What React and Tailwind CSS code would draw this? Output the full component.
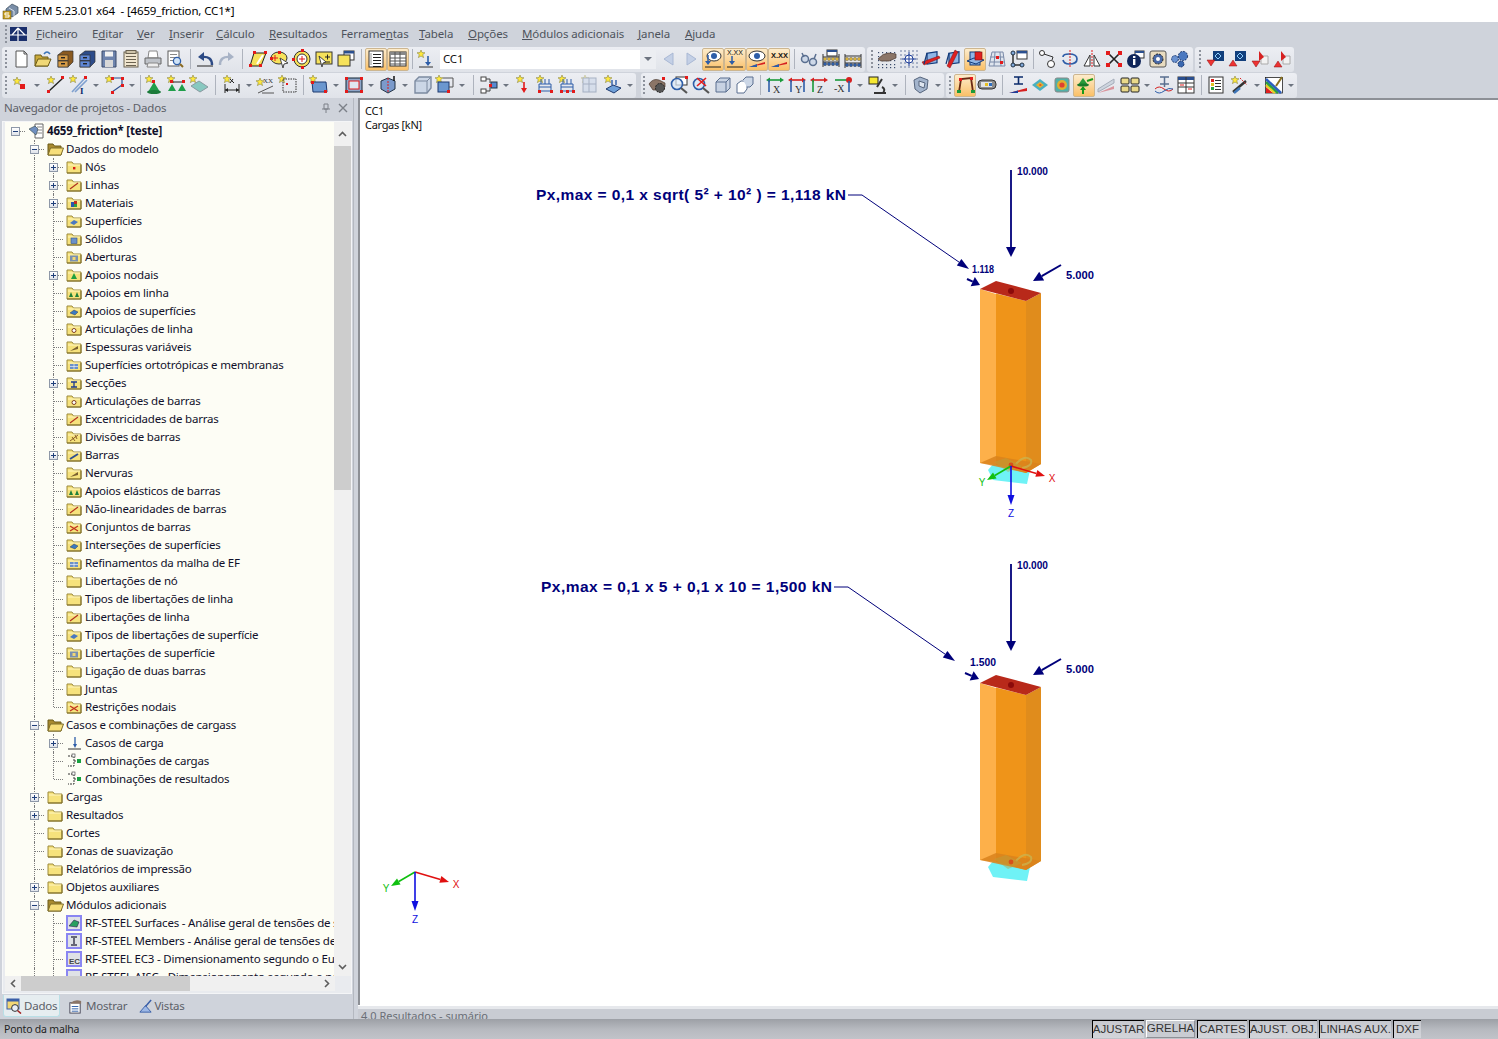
import React from 'react';

const UI = { fontFamily: '"Noto Sans", "Open Sans", sans-serif' };
const ARIAL = { fontFamily: '"Liberation Sans", Arial, sans-serif' };

const Star = ({ x = 0, y = 0 }) => (
  <polygon
    transform={`translate(${x} ${y})`}
    points="4,0 5,2.6 8,2.8 5.7,4.6 6.6,7.6 4,6 1.4,7.6 2.3,4.6 0,2.8 3,2.6"
    fill="#ffe93b"
    stroke="#8a8440"
    strokeWidth="0.6"
  />
);
const Red = ({ x, y, s = 3 }) => <rect x={x} y={y} width={s} height={s} fill="#e31b1b" />;
const Blue = '#2d5da8';
const Navy = '#0a2a6b';
const Doc = ({ x = 4, y = 2, w = 12, h = 16, fill = '#fff' }) => (
  <rect x={x} y={y} width={w} height={h} fill={fill} stroke="#5b5b5b" strokeWidth="1" />
);
const Lines = ({ x, y, w, n = 3, c = '#444', step = 3 }) => (
  <g stroke={c} strokeWidth="1">
    {Array.from({ length: n }).map((_, i) => (
      <line key={i} x1={x} x2={x + w} y1={y + i * step + 0.5} y2={y + i * step + 0.5} />
    ))}
  </g>
);
const Cabinet = ({ a, b }) => (
  <g>
    <path d="M3 6 L8 2 H18 V13 L13 18 H3 Z" fill={b} stroke="#333" strokeWidth="0.7" />
    <rect x="3" y="6" width="10" height="5.5" fill={a} stroke="#333" strokeWidth="0.7" />
    <rect x="3" y="12" width="10" height="6" fill={a} stroke="#333" strokeWidth="0.7" />
    <rect x="6" y="8" width="4" height="1.4" fill="#222" />
    <rect x="6" y="14" width="4" height="1.4" fill="#222" />
  </g>
);
const Axes = ({ c1, c2, label, arrow = 'M10 4 V18' }) => (
  <g>
    <path d="M4 5 H16" stroke={c1} strokeWidth="1.6" />
    <path d="M1 5 L5 2.5 V7.5 Z M19 5 L15 2.5 V7.5 Z" fill={c1} />
    <path d={arrow} stroke={c2} strokeWidth="1.6" fill="none" />
    <text x="8" y="18" fontSize="10" fontFamily="Liberation Serif, serif" fill="#333">{label}</text>
  </g>
);
const Sheet3d = ({ c = '#8fa9cf' }) => (
  <g>
    <path d="M3 7 L7 3 H17 V13 L13 17 H3 Z" fill={c} fillOpacity="0.35" stroke="#5a6f90" strokeWidth="1" />
    <path d="M3 7 H13 V17 M13 7 L17 3" fill="none" stroke="#5a6f90" strokeWidth="1" />
  </g>
);
const Abacus = () => (
  <g>
    <rect x="6" y="1" width="10" height="6" fill="#fff" stroke="#333" />
    <rect x="6" y="1" width="10" height="2" fill="#2b4f8f" />
    <path d="M2 8 H18 M2 13 H18 M2 5 V18 M18 5 V18" stroke="#333" fill="none" />
    {[4, 8, 12, 16].map((x) => (
      <g key={x}>
        <circle cx={x} cy="10" r="1.7" fill="#d8b23c" stroke="#555" strokeWidth="0.4" />
        <circle cx={x} cy="15" r="1.7" fill={Blue} stroke="#333" strokeWidth="0.4" />
      </g>
    ))}
  </g>
);
const PlaneCross = ({ flip }) => (
  <g>
    <rect x="6" y="3" width="10" height="11" fill="#8fb6e6" stroke="#123a7a" strokeWidth="1.2" transform="skewY(-8) translate(0 2)" />
    <path d={flip ? 'M12 1 L15 3 L7 19 L4 17 Z' : 'M1 13 L18 7 L19 9 L3 16 Z'} fill="#e02020" stroke="#7a1010" strokeWidth="0.5" />
    <path d="M6 4 L3 15" stroke="#123a7a" strokeWidth="1.2" />
  </g>
);
const LoadFlag = ({ up }) => (
  <g>
    <rect x="7" y="2" width="11" height="10" fill="#123f7c" />
    <path d="M9 7 L12 4 L15 7 L12 10 Z" fill="none" stroke="#8fd0ff" />
    <path d={up ? 'M1 17 L5 11 L9 17 Z' : 'M1 11 H9 L5 17 Z'} fill="#e33" stroke="#8a1010" strokeWidth="0.5" />
  </g>
);
const RedFlag = ({ up }) => (
  <g>
    <path d="M11 7 H18 V15 H11 Z" fill="#f2f2f2" stroke="#aaa" />
    <path d="M9 2 L14 8 L9 12 Z" fill="#d62020" />
    <path d={up ? 'M2 18 L6 12 L10 18 Z' : 'M2 12 H10 L6 18 Z'} fill="#e33" stroke="#8a1010" strokeWidth="0.5" />
  </g>
);
const LoadOn = ({ h = false }) => (
  <g>
    <Star x="1" y="0" />
    <path d="M4 9 H16 V16 H4 Z" fill="none" stroke="#2d5da8" />
    <path d="M6 4 V9 M10 4 V9 M14 4 V9 M4 12 H16" stroke="#2d5da8" />
    <Red x="3" y="15" />
    <Red x="15" y="15" />
    {h && <Red x="9" y="15" />}
  </g>
);

const ICONS = {
  newdoc: <path d="M5 2 H13 L16 5 V18 H5 Z M13 2 V5 H16" fill="#fff" stroke="#555" />,
  open: (
    <g>
      <path d="M2 6 H8 L9 8 H15 V17 H2 Z" fill="#c9a93a" stroke="#6b5a18" />
      <path d="M2 17 L5 10 H18 L15 17 Z" fill="#f0d877" stroke="#6b5a18" />
      <path d="M11 5 Q14 1 17 5" stroke="#3d75b8" strokeWidth="1.6" fill="none" />
    </g>
  ),
  drawerA: <Cabinet a="#d69b45" b="#8a5a20" />,
  drawerB: <Cabinet a="#5f87d6" b="#2d4c8a" />,
  save: (
    <g>
      <path d="M3 2 H17 V18 H3 Z" fill="#6e84ad" stroke="#3a4a6b" />
      <rect x="6" y="2.5" width="8" height="5" fill="#f2f2f2" />
      <rect x="6" y="11" width="8" height="7" fill="#d8d8d8" />
    </g>
  ),
  notes: (
    <g>
      <rect x="3" y="3" width="14" height="15" fill="#f1e6cf" stroke="#6b6250" />
      <rect x="5" y="1.5" width="10" height="3" fill="#cfc4aa" stroke="#6b6250" />
      <Lines x={5} y={7} w={10} n={4} c="#6b6250" />
    </g>
  ),
  print: (
    <g>
      <path d="M6 2 H14 L15 9 H5 Z" fill="#fff" stroke="#888" />
      <path d="M2 9 H18 V15 H2 Z" fill="#bfc3c9" stroke="#666" />
      <path d="M5 14 H15 L16 18 H4 Z" fill="#eee" stroke="#888" />
    </g>
  ),
  preview: (
    <g>
      <Doc x={3} y={2} w={11} h={15} />
      <Lines x={5} y={5} w={7} n={3} c="#888" />
      <circle cx="12" cy="12" r="3.6" fill="#cfe3f7" stroke={Blue} strokeWidth="1.3" />
      <path d="M15 15 L18 18" stroke="#8a6a20" strokeWidth="2" />
    </g>
  ),
  undo: (
    <g>
      <path d="M17 16 Q17 7 7 8" fill="none" stroke="#2c4a85" strokeWidth="2.4" />
      <path d="M3 8 L9 3 V12 Z" fill="#2c4a85" />
      <path d="M2 17 H18" stroke="#222" />
    </g>
  ),
  redo: (
    <g>
      <path d="M3 16 Q3 7 13 8" fill="none" stroke="#a8b3c6" strokeWidth="2.4" />
      <path d="M17 8 L11 3 V12 Z" fill="#a8b3c6" />
    </g>
  ),
  para: (
    <g>
      <path d="M6 4 H18 L13 17 H2 Z" fill="#f6e25b" stroke="#222" />
      <path d="M9 15 L15 6" stroke="#fff" strokeWidth="2" />
      <Red x="5" y="2" /><Red x="16" y="2" /><Red x="1" y="15" /><Red x="11" y="15" />
    </g>
  ),
  ellipse: (
    <g>
      <ellipse cx="9" cy="9" rx="8" ry="6" fill="#f6e25b" stroke="#333" />
      <path d="M3 9 H8 M5 6 V12" stroke="#e31b1b" />
      <path d="M10 9 L18 14 L14 15 L13 19 Z" fill="#fff" stroke="#444" />
      <Red x="0" y="8" /><Red x="8" y="2" />
    </g>
  ),
  target: (
    <g>
      <circle cx="10" cy="10" r="8" fill="#f6e25b" stroke="#333" />
      <circle cx="10" cy="10" r="5" fill="#fff" stroke="#333" />
      <path d="M7 10 H13 M10 7 V13" stroke="#e31b1b" />
      <Red x="0" y="9" /><Red x="9" y="0" /><Red x="9" y="17" />
    </g>
  ),
  note: (
    <g>
      <rect x="2" y="3" width="16" height="12" fill="#f6e25b" stroke="#333" />
      <path d="M11 8 H16 M13.5 5.5 V10.5 M11 13 H16" stroke="#222" />
      <path d="M5 7 L12 13 L9 14 L8 18 Z" fill="#fff" stroke="#444" />
    </g>
  ),
  win: (
    <g>
      <rect x="8" y="2" width="10" height="9" fill="#fff" stroke="#333" />
      <rect x="8" y="2" width="10" height="2.5" fill="#2b4f8f" />
      <rect x="2" y="6" width="12" height="11" fill="#f6e25b" stroke="#333" />
    </g>
  ),
  list: (
    <g>
      <rect x="3" y="2" width="14" height="16" fill="#fff" stroke="#333" />
      <Lines x={7} y={5} w={8} n={5} c="#222" />
      <path d="M5 4 V16" stroke="#999" />
    </g>
  ),
  table: (
    <g>
      <rect x="2" y="3" width="16" height="14" fill="#fff" stroke="#333" />
      <rect x="2" y="3" width="16" height="3" fill="#888" />
      <path d="M2 9 H18 M2 12 H18 M2 15 H18 M7 3 V17 M12 3 V17" stroke="#555" />
    </g>
  ),
  ccload: (
    <g>
      <Star x="1" y="1" />
      <path d="M12 7 V15" stroke={Blue} strokeWidth="1.6" />
      <path d="M9 13 H15 L12 17 Z" fill={Blue} />
      <path d="M3 18 H17" stroke="#333" />
    </g>
  ),
  prev: <path d="M14 4 V16 L5 10 Z" fill="#c4d0e6" stroke="#a9b8d4" />,
  next: <path d="M6 4 V16 L15 10 Z" fill="#c4d0e6" stroke="#a9b8d4" />,
  showP: (
    <g>
      <ellipse cx="11" cy="7" rx="7" ry="5" fill="#fff" stroke="#333" />
      <circle cx="11" cy="7" r="3" fill={Blue} />
      <path d="M5 6 V14" stroke={Blue} strokeWidth="1.5" />
      <path d="M2 12 H8 L5 16 Z" fill={Blue} />
      <path d="M2 18 H18" stroke="#222" />
    </g>
  ),
  showX: (
    <g>
      <text x="2" y="6" fontSize="7" fontFamily="Liberation Sans, sans-serif" fill="#111">X.XX</text>
      <path d="M7 7 V14" stroke={Blue} strokeWidth="1.5" />
      <path d="M4 12 H10 L7 16 Z" fill={Blue} />
      <path d="M2 18 H18" stroke="#222" />
    </g>
  ),
  eyeLine: (
    <g>
      <ellipse cx="10" cy="7" rx="8" ry="5" fill="#fff" stroke="#333" />
      <circle cx="10" cy="7" r="3" fill={Blue} />
      <path d="M2 18 L18 13 V15 L2 18 Z" fill="#d62020" />
      <path d="M2 18 L10 15 V18 Z" fill={Blue} />
    </g>
  ),
  xxLine: (
    <g>
      <text x="2" y="9" fontSize="7.5" fontWeight="700" fontFamily="Liberation Sans, sans-serif" fill="#111">X.XX</text>
      <path d="M2 18 L18 13 V15 L2 18 Z" fill="#d62020" />
      <path d="M2 18 L10 15 V18 Z" fill={Blue} />
    </g>
  ),
  glasses: (
    <g>
      <circle cx="6" cy="10" r="3.5" fill="#cdd8e8" stroke="#5a6f90" strokeWidth="1.5" />
      <circle cx="14" cy="13" r="3.5" fill="#cdd8e8" stroke="#5a6f90" strokeWidth="1.5" />
      <path d="M3 4 L5 8 M17 5 L15 10" stroke="#5a6f90" strokeWidth="1.5" />
    </g>
  ),
  abacus: <Abacus />,
  abacus2: <g transform="translate(0 1)"><path d="M2 6 H18 M2 13 H18 M2 4 V18 M18 4 V18" stroke="#333" fill="none" />{[4, 8, 12, 16].map((x) => (<g key={x}><circle cx={x} cy="9" r="1.7" fill="#d8b23c" stroke="#555" strokeWidth="0.4" /><circle cx={x} cy="15" r="1.7" fill={Blue} stroke="#333" strokeWidth="0.4" /></g>))}</g>,
  hand: (
    <g>
      <g fill="#3a4a6a">{[3, 7, 11, 15, 18].map((y) => [1, 5, 9, 13, 17].map((x) => <rect key={`${x}-${y}`} x={x} y={y} width="1.2" height="1.2" />))}</g>
      <path d="M1 10 Q6 4 12 4 L19 5 V9 L12 12 H4 Z" fill="#8b7567" stroke="#4a3a30" strokeWidth="0.7" />
    </g>
  ),
  gridT: (
    <g>
      <g fill="#6a7aa0">{[2, 6, 10, 14, 18].map((y) => [2, 6, 10, 14, 18].map((x) => <rect key={`${x}-${y}`} x={x - 0.7} y={y - 0.7} width="1.4" height="1.4" />))}</g>
      <circle cx="10" cy="10" r="4" fill="#fff" stroke="#1f3f9a" />
      <path d="M3 10 H17 M10 3 V17" stroke="#1f3f9a" />
    </g>
  ),
  plane1: <PlaneCross />,
  plane2: <PlaneCross flip />,
  plane3: <g><rect x="5" y="3" width="10" height="13" fill="#8fb6e6" stroke="#123a7a" /><path d="M2 12 L9 9 L19 11 L11 15 Z" fill="#8fb6e6" stroke="#123a7a" /><rect x="10" y="3" width="7" height="8" fill="#e02020" stroke="#7a1010" strokeWidth="0.6" /></g>,
  gridP: (
    <g>
      <path d="M5 3 H16 L18 17 H2 Z" fill="#dfe5ee" stroke="#7a8aa8" />
      <path d="M3 8 H17 M3 13 H18 M8 3 L7 17 M13 3 L14 17" stroke="#7a8aa8" />
      <Red x="9" y="7" /><Red x="13" y="12" />
    </g>
  ),
  winNode: (
    <g>
      <rect x="8" y="2" width="10" height="8" fill="#fff" stroke="#333" />
      <rect x="8" y="2" width="10" height="2.4" fill="#2b4f8f" />
      <path d="M4 5 V16 H12" fill="none" stroke="#333" strokeWidth="1.5" />
      <circle cx="4" cy="4" r="2" fill="#7fa7d8" stroke="#234" /><circle cx="4" cy="16" r="2" fill="#7fa7d8" stroke="#234" /><circle cx="13" cy="16" r="2" fill="#7fa7d8" stroke="#234" />
    </g>
  ),
  nodes: (
    <g fill="none" stroke="#333">
      <circle cx="4" cy="4" r="2.5" fill="#fff" /><circle cx="13" cy="15" r="3.5" fill="#fff" />
      <path d="M6 5 L15 8 L14 11" />
    </g>
  ),
  rot: (
    <g>
      <path d="M3 8 Q3 5 9 5 Q17 5 17 10 Q17 15 9 15 Q4 15 3 11" fill="none" stroke={Blue} strokeWidth="1.7" />
      <path d="M10 1 V19" stroke="#e31b1b" strokeDasharray="2 1" />
    </g>
  ),
  mirror: (
    <g>
      <path d="M8 6 V17 H2 Z M12 6 V17 H18 Z" fill="#fff" stroke="#333" />
      <path d="M10 1 V19" stroke="#e31b1b" strokeDasharray="2 1" />
    </g>
  ),
  crossN: (
    <g>
      <path d="M4 4 L16 16 M16 4 L4 16" stroke="#222" strokeWidth="1.6" />
      <Red x="2" y="2" s={4} /><Red x="14" y="2" s={4} /><Red x="2" y="14" s={4} /><Red x="14" y="14" s={4} />
    </g>
  ),
  info: (
    <g>
      <rect x="9" y="2" width="9" height="7" fill="#fff" stroke="#333" />
      <rect x="9" y="2" width="9" height="2" fill="#2b4f8f" />
      <circle cx="8" cy="12" r="7" fill="#10265a" />
      <rect x="7" y="10" width="2.4" height="6" fill="#fff" />
      <rect x="7" y="7" width="2.4" height="2" fill="#fff" />
    </g>
  ),
  gearBox: (
    <g>
      <rect x="2" y="2" width="16" height="16" rx="2" fill="#e9dcc0" stroke="#555" />
      <circle cx="10" cy="10" r="5" fill="#4a6aa8" stroke="#222" strokeDasharray="2 1" />
      <circle cx="10" cy="10" r="2" fill="#fff" />
    </g>
  ),
  gears: (
    <g>
      <circle cx="13" cy="7" r="4.6" fill="#4a78c0" stroke="#1e3a70" strokeDasharray="2 1" />
      <circle cx="5" cy="10" r="3.4" fill="#6a92d0" stroke="#1e3a70" strokeDasharray="2 1" />
      <circle cx="11" cy="15" r="3" fill="#3a68b0" stroke="#1e3a70" strokeDasharray="2 1" />
    </g>
  ),
  flagD: <LoadFlag />,
  flagU: <LoadFlag up />,
  redD: <RedFlag />,
  redU: <RedFlag up />,
  nodeNew: <g><Star x="3" y="2" /><Red x="10" y="9" s={5} /></g>,
  lineNew: <g><Star x="1" y="1" /><path d="M3 16 L17 3" stroke="#222" strokeWidth="1.4" /><Red x="1" y="15" /><Red x="15" y="1" /></g>,
  memberNew: (
    <g>
      <Star x="0" y="0" />
      <path d="M3 17 L16 3 M6 17 L18 5" stroke="#7fa0cf" strokeWidth="1.6" />
      <Red x="15" y="1" />
      <text x="11" y="19" fontSize="9" fontWeight="700" fontFamily="Liberation Serif, serif" fill={Navy}>I</text>
    </g>
  ),
  polyNew: <g><Star x="0" y="0" /><path d="M6 3 H17 V10 L7 17" fill="none" stroke="#2d4f90" strokeWidth="1.2" /><Red x="16" y="2" /><Red x="16" y="9" /><Red x="6" y="16" /><Red x="6" y="2" /></g>,
  supNode: <g><Star x="1" y="0" /><path d="M10 7 L16 17 H4 Z" fill="#1f9e4a" /><ellipse cx="10" cy="17" rx="7" ry="2" fill="#1b7a3a" /><Red x="8" y="5" /></g>,
  supLine: <g><Star x="0" y="0" /><path d="M4 7 H16" stroke="#222" /><Red x="3" y="5" /><Red x="15" y="5" /><path d="M5 9 L9 16 H1 Z M15 9 L19 16 H11 Z" fill="#1f9e4a" /></g>,
  supSurf: <g><Star x="0" y="0" /><path d="M2 11 L10 6 L19 12 L11 17 Z" fill="#88c8c0" stroke="#8a9aa0" /></g>,
  dim: <g><Star x="1" y="0" /><path d="M3 15 H17 M3 9 V18 M17 9 V18 M11 4 L8 8 M8 4 L12 8" stroke="#222" /><path d="M3 15 L6 13 V17 Z M17 15 L14 13 V17 Z" fill="#222" /></g>,
  dimX: <g><Star x="0" y="3" /><text x="7" y="8" fontSize="7" fontFamily="Liberation Serif, serif" fill="#333">XX</text><path d="M2 18 L17 11 M6 18 H18" stroke="#555" /></g>,
  selBox: <g><Star x="0" y="0" /><rect x="5" y="4" width="13" height="13" fill="none" stroke="#333" strokeDasharray="1.5 1" /><Red x="8" y="8" s={2} /></g>,
  surfNew: <g><Star x="0" y="0" /><path d="M3 7 H17 L18 17 H4 Z" fill="#6b97cf" stroke="#1e3a70" /><Red x="15" y="15" /><Red x="2" y="6" /></g>,
  openNew: <g><rect x="2" y="3" width="16" height="14" fill="#8fa6c8" stroke="#123" /><rect x="5" y="6" width="10" height="8" fill="#dfe6f0" stroke="#e31b1b" /><Red x="1" y="2" /><Red x="16" y="2" /><Red x="1" y="15" /><Red x="16" y="15" /></g>,
  solidArrow: <g><path d="M3 6 L10 3 L17 6 V14 L10 18 L3 14 Z" fill="#7b9acb" stroke="#234" /><path d="M10 3 V18" stroke="#e31b1b" strokeDasharray="2 1" /><path d="M16 1 V6" stroke="#111" strokeWidth="1.5" /></g>,
  solid: <g><path d="M2 6 L6 2 H18 V13 L14 18 H2 Z" fill="#cbd6e6" stroke="#7c8aa0" strokeWidth="1.4" /><path d="M2 6 H14 V18 M14 6 L18 2" fill="none" stroke="#7c8aa0" /></g>,
  solidNew: <g><Star x="0" y="0" /><rect x="3" y="7" width="11" height="10" fill="#6b97cf" stroke="#1e3a70" /><path d="M8 3 H18 V12 H14" fill="none" stroke="#555" /><Red x="12" y="15" /></g>,
  flowA: <g><rect x="2" y="2" width="5" height="4" fill="#fff" stroke="#444" /><rect x="2" y="14" width="5" height="4" fill="#fff" stroke="#444" /><rect x="12" y="7" width="6" height="6" fill="#5a8ad0" stroke="#234" /><path d="M7 4 H11 V8 M7 16 H11 V12" fill="none" stroke="#444" /><Red x="10" y="9" /></g>,
  nodeLoad: <g><Star x="3" y="0" /><path d="M11 7 V15" stroke="#e31b1b" strokeWidth="1.6" /><path d="M8 13 H14 L11 18 Z" fill="#e31b1b" /></g>,
  lineLoad: <LoadOn />,
  lineLoad2: <LoadOn h />,
  ghostLoad: <g opacity="0.45"><Star x="2" y="0" /><rect x="4" y="3" width="13" height="14" fill="#c4d2e8" stroke="#5a6f90" /><path d="M4 9 H17 M10 3 V17" stroke="#5a6f90" /></g>,
  surfLoad: <g><Star x="1" y="0" /><path d="M9 5 V10 M13 5 V10" stroke={Blue} strokeWidth="1.4" /><path d="M3 14 L10 10 L18 13 L11 18 Z" fill="#6fa0d8" stroke="#1e3a70" /></g>,
  handCog: <g><path d="M2 9 Q6 3 12 5 L18 8 V12 L12 15 H6 Z" fill="#8b7567" stroke="#4a3a30" strokeWidth="0.7" /><circle cx="13" cy="13" r="4.5" fill="#555" stroke="#222" strokeDasharray="2 1" /><Red x="15" y="2" /></g>,
  zoomWin: <g><rect x="7" y="2" width="11" height="8" fill="#fff" stroke="#333" /><circle cx="8" cy="9" r="5.5" fill="#dbe8f6" fillOpacity="0.7" stroke={Blue} strokeWidth="1.6" /><path d="M12 13 L18 18" stroke="#555" strokeWidth="2.2" /><Red x="16" y="1" /></g>,
  zoomX: <g><circle cx="8" cy="9" r="5.5" fill="#dbe8f6" stroke={Blue} strokeWidth="1.6" /><path d="M12 13 L18 18" stroke="#555" strokeWidth="2.2" /><path d="M6 3 L15 11 M15 3 L6 11" stroke="#e31b1b" strokeWidth="1.6" /></g>,
  box: <Sheet3d />,
  boxes: <g><path d="M2 9 L6 6 H12 V14 L9 18 H2 Z" fill="#fff" stroke="#5a6f90" /><path d="M8 5 L11 2 H18 V9 L15 12 H12" fill="#cbd6e6" stroke="#5a6f90" /></g>,
  axX: <Axes c1="#1a9a3a" c2={Blue} label="X" arrow="M4 5 V17" />,
  axY: <Axes c1="#d62020" c2={Blue} label="Y" arrow="M4 5 V17 M17 5 V17" />,
  axZ: <Axes c1="#d62020" c2="#1a9a3a" label="Z" arrow="M4 5 V17" />,
  axMX: <g><path d="M2 5 H14" stroke="#1a9a3a" strokeWidth="1.6" /><circle cx="16" cy="5" r="3" fill="#d62020" /><path d="M16 6 V17" stroke={Blue} strokeWidth="1.6" /><text x="1" y="17" fontSize="10" fontFamily="Liberation Serif, serif" fill="#333">-X</text></g>,
  micro: <g><rect x="1" y="2" width="9" height="7" fill="#f6e832" stroke="#222" /><path d="M14 4 L9 12 M6 18 H18 M14 12 Q18 14 15 18" stroke="#333" strokeWidth="2" fill="none" /></g>,
  shape: <g><path d="M3 5 L9 2 L17 5 L16 14 L9 18 L4 14 Z" fill="#a3b4cc" stroke="#56657d" /><path d="M8 6 L14 8 L13 13 L8 11 Z" fill="#dfe6f0" stroke="#56657d" /></g>,
  frame: <g><path d="M4 17 L6 4 L16 3 L18 17" fill="none" stroke="#6a2a14" strokeWidth="1.8" /><Red x="4" y="3" /><Red x="15" y="2" /><rect x="2" y="15" width="4" height="3" fill="#1a9a3a" /><rect x="16" y="15" width="4" height="3" fill="#1a9a3a" /></g>,
  pill: <g><rect x="1" y="5" width="18" height="9" rx="4" fill="#8d8d8d" stroke="#333" /><rect x="4" y="7" width="11" height="5" fill="#e4e4e4" /><rect x="8" y="8" width="3" height="3" fill="#e8c020" /><rect x="12" y="8" width="3" height="3" fill="#2f6fc0" /></g>,
  ibeam: <g><path d="M6 2 H15 M6 9 H15 M10.5 2 V9" stroke={Navy} strokeWidth="1.6" /><path d="M1 18 L19 13 V16 L1 18 Z" fill="#d62020" /><path d="M1 18 L10 15.5 V18 Z" fill="#1f3f9a" /></g>,
  surfColor: <g><path d="M2 10 L10 4 L18 10 L10 16 Z" fill="#4ab0c0" /><path d="M6 10 L10 7 L14 10 L10 13 Z" fill="#e8b030" /><path d="M9 10 L10 9 L12 10 L10 11 Z" fill="#e04020" /></g>,
  cubeColor: <g><rect x="3" y="3" width="14" height="14" rx="2" fill="#52b0a8" stroke="#888" /><circle cx="10" cy="10" r="5" fill="#e0b030" /><circle cx="10" cy="10" r="2.6" fill="#e04030" /></g>,
  supResult: <g><path d="M9 3 L14 10 H4 Z" fill="#2a9a3a" /><ellipse cx="9" cy="10" rx="6" ry="1.6" fill="#1a7a2a" /><path d="M19 4 L13 6" stroke="#1a9a1a" strokeWidth="2" /><path d="M9 12 V19" stroke="#1a9a1a" strokeWidth="2" /><path d="M6 15 L9 11 L12 15 Z" fill="#1a9a1a" /></g>,
  slope: <g opacity="0.7"><path d="M2 14 L18 4 V8 L2 17 Z" fill="#c4cdd9" stroke="#8a94a4" /><path d="M2 18 L18 11 V14 L2 18 Z" fill="#d6707a" /></g>,
  fourBox: <g fill="#ead98a" stroke="#222">{[[1, 3], [11, 3], [1, 11], [11, 11]].map(([x, y]) => <rect key={`${x}${y}`} x={x} y={y} width="8" height="6" rx="1" />)}</g>,
  ibeamW: <g><path d="M6 2 H15 M6 9 H15 M10.5 2 V12" stroke="#5a6f90" strokeWidth="1.5" /><path d="M1 14 Q5 10 10 14 T19 14" fill="none" stroke="#d62020" /><path d="M1 16 Q5 20 10 16 T19 14" fill="none" stroke={Blue} /></g>,
  tableC: <g><rect x="2" y="2" width="16" height="16" fill="#fff" stroke="#333" /><rect x="2" y="2" width="16" height="3" fill="#2b4f8f" /><path d="M10 2 V18 M2 8 H18 M2 12 H18" stroke="#333" /><rect x="4" y="9.5" width="4" height="1" fill="#e31b1b" /><rect x="12" y="13.5" width="4" height="1" fill="#e31b1b" /></g>,
  report: <g><rect x="3" y="2" width="14" height="16" fill="#fff" stroke="#333" /><rect x="5" y="4" width="3" height="3" fill="#d62020" /><rect x="5" y="8" width="3" height="3" fill="#e0c020" /><rect x="5" y="12" width="3" height="3" fill="#2aa040" /><Lines x={9} y={5} w={6} n={4} c="#333" /></g>,
  wand: <g><Star x="1" y="1" /><path d="M3 17 L16 6" stroke="#333" strokeWidth="2.4" /><path d="M10 3 L17 10" stroke="#d62020" strokeDasharray="1.5 1" /><path d="M4 18 L10 13" stroke="#3d75b8" strokeWidth="2.4" /></g>,
  rainbow: (
    <g fill="none" strokeWidth="2.4">
      <rect x="1.5" y="2.5" width="17" height="15.5" fill="#fff" stroke="#222" strokeWidth="0.8" />
      <path d="M2 18 V12 L9 18 Z" fill="#e02020" stroke="none" />
      <path d="M2 10 L11 18" stroke="#e8d020" />
      <path d="M2 7 L14 18" stroke="#2aa040" />
      <path d="M2 4 L17 18" stroke="#2b5fc0" />
      <path d="M12 11 L18 2" stroke="#8a7020" strokeWidth="2" />
    </g>
  ),
};

const Ico = ({ name, active }) => (
  <span
    className={`flex h-[23px] w-[22px] shrink-0 items-center justify-center rounded-[2px] ${
      active ? 'border border-[#cdb690] bg-linear-to-b from-[#fdeccb] to-[#fac066]' : ''
    }`}
  >
    <svg width="20" height="20" viewBox="0 0 20 20">{ICONS[name]}</svg>
  </span>
);

const Dd = () => (
  <span className="flex h-[22px] w-[12px] shrink-0 items-center justify-center">
    <span className="h-0 w-0 border-x-[3px] border-t-[3px] border-x-transparent border-t-[#6d7480]" />
  </span>
);

const GAP = { 1: 'w-[1px]', 2: 'w-[2px]', 3: 'w-[3px]' };
const SEP = {
  5: 'w-[5px]', 6: 'w-[6px]', 7: 'w-[7px]', 8: 'w-[8px]', 9: 'w-[9px]', 10: 'w-[10px]', 11: 'w-[11px]',
};

const Grip = ({ cls }) => (
  <span className={`flex shrink-0 flex-col items-center justify-center gap-[2px] ${cls}`}>
    {[0, 1, 2, 3, 4].map((i) => (
      <span key={i} className="h-[2px] w-[2px] bg-[#8d929c]" />
    ))}
  </span>
);

const Combo = () => (
  <span className="ml-[3px] mr-[2px] flex h-[19px] w-[216px] shrink-0 items-center justify-between bg-white text-[11.5px] tracking-[-0.2px] text-[#111]">
    <span className="pl-[3px]">CC1</span>
    <span className="flex h-full w-[16px] items-center justify-center bg-[#eceef2]">
      <span className="h-0 w-0 border-x-[4px] border-t-[4px] border-x-transparent border-t-[#6d7480]" />
    </span>
  </span>
);

// tokens: name = icon, *name = active, v = dropdown, |n = separator, +n = small gap
const Token = ({ t }) => {
  if (t === 'v') return <Dd />;
  if (t === 'combo') return <Combo />;
  if (t[0] === '|') {
    return (
      <span className={`flex h-[20px] shrink-0 justify-center ${SEP[t.slice(1)]}`}>
        <span className="h-full w-px bg-[#aeb3bd]" />
      </span>
    );
  }
  if (t[0] === '+') return <span className={`shrink-0 ${GAP[t.slice(1)]}`} />;
  if (t[0] === '*') return <Ico name={t.slice(1)} active />;
  return <Ico name={t} />;
};

const Toolbar = ({ tokens, cls, grip }) => (
  <div className={`flex h-[25px] shrink-0 items-center rounded-[3px] bg-linear-to-b from-[#eceef3] to-[#e0e3e9] ${cls}`}>
    <Grip cls={grip} />
    {tokens.split(' ').map((t, i) => <Token key={i} t={t} />)}
  </div>
);

const ROW1A = 'newdoc open drawerA drawerB save notes print preview |8 undo redo |9 para ellipse target note win |8 *list *table |6 ccload combo prev next *showP *showX *eyeLine *xxLine |8 glasses abacus abacus2';
const ROW1C = 'hand gridT plane1 plane2 *plane3 gridP winNode |7 nodes rot mirror crossN info gearBox gears';
const ROW1D = 'flagD flagU redD redU';
const ROW2A = 'nodeNew v +2 lineNew +1 memberNew v +2 polyNew v |5 supNode +1 supLine supSurf |11 dim v dimX selBox |9 surfNew v +1 openNew v solidArrow v +1 solid solidNew v |10 flowA v nodeLoad lineLoad lineLoad2 ghostLoad +2 surfLoad v';
const ROW2B = 'handCog zoomWin zoomX box boxes |8 axX axY axZ +2 axMX v +1 micro v |9 shape v';
const ROW2C = '*frame pill |9 ibeam surfColor cubeColor *supResult slope +2 fourBox v ibeamW tableC |8 report +2 wand v rainbow v';

const MENU = [
  ['', 'F', 'icheiro', 'w-[56px]'],
  ['E', 'd', 'itar', 'w-[45px]'],
  ['', 'V', 'er', 'w-[32px]'],
  ['', 'I', 'nserir', 'w-[47px]'],
  ['', 'C', 'álculo', 'w-[53px]'],
  ['', 'R', 'esultados', 'w-[72px]'],
  ['Ferrame', 'n', 'tas', 'w-[78px]'],
  ['', 'T', 'abela', 'w-[49px]'],
  ['', 'O', 'pções', 'w-[54px]'],
  ['', 'M', 'ódulos adicionais', 'w-[116px]'],
  ['', 'J', 'anela', 'w-[47px]'],
  ['', 'A', 'juda', 'w-[50px]'],
];

// level, label, expander, marker
const TREE = [
  [1, 'Dados do modelo', '-', 'openF'],
  [2, 'Nós', '+', 'dot'],
  [2, 'Linhas', '+', 'line'],
  [2, 'Materiais', '+', 'mat'],
  [2, 'Superfícies', '', 'surf'],
  [2, 'Sólidos', '', 'solid'],
  [2, 'Aberturas', '', 'hole'],
  [2, 'Apoios nodais', '+', 'sup'],
  [2, 'Apoios em linha', '', 'lsup'],
  [2, 'Apoios de superfícies', '', 'ssup'],
  [2, 'Articulações de linha', '', 'hinge'],
  [2, 'Espessuras variáveis', '', 'thick'],
  [2, 'Superfícies ortotrópicas e membranas', '', 'ortho'],
  [2, 'Secções', '+', 'sec'],
  [2, 'Articulações de barras', '', 'hinge'],
  [2, 'Excentricidades de barras', '', 'line'],
  [2, 'Divisões de barras', '', 'div'],
  [2, 'Barras', '+', 'bar'],
  [2, 'Nervuras', '', 'thick'],
  [2, 'Apoios elásticos de barras', '', 'lsup'],
  [2, 'Não-linearidades de barras', '', 'line'],
  [2, 'Conjuntos de barras', '', 'set'],
  [2, 'Interseções de superfícies', '', 'ssup'],
  [2, 'Refinamentos da malha de EF', '', 'ortho'],
  [2, 'Libertações de nó', '', 'plain'],
  [2, 'Tipos de libertações de linha', '', 'plain'],
  [2, 'Libertações de linha', '', 'line'],
  [2, 'Tipos de libertações de superfície', '', 'surf'],
  [2, 'Libertações de superfície', '', 'hole'],
  [2, 'Ligação de duas barras', '', 'plain'],
  [2, 'Juntas', '', 'plain'],
  [2, 'Restrições nodais', '', 'set', 'end'],
  [1, 'Casos e combinações de cargass', '-', 'openF'],
  [2, 'Casos de carga', '+', 'case'],
  [2, 'Combinações de cargas', '', 'combo'],
  [2, 'Combinações de resultados', '', 'combo', 'end'],
  [1, 'Cargas', '+', 'closedF'],
  [1, 'Resultados', '+', 'closedF'],
  [1, 'Cortes', '', 'closedF'],
  [1, 'Zonas de suavização', '', 'closedF'],
  [1, 'Relatórios de impressão', '', 'closedF'],
  [1, 'Objetos auxiliares', '+', 'closedF'],
  [1, 'Módulos adicionais', '-', 'openF'],
  [2, 'RF-STEEL Surfaces - Análise geral de tensões de superfícies', '', 'modS'],
  [2, 'RF-STEEL Members - Análise geral de tensões de barras', '', 'modM'],
  [2, 'RF-STEEL EC3 - Dimensionamento segundo o Eurocódigo 3', '', 'modE'],
  [2, 'RF-STEEL AISC - Dimensionamento segundo a norma AISC', '', 'modE'],
];

const FolderBase = ({ children }) => (
  <g>
    <path d="M1 3 H6 L7.5 5 H15 V14 H1 Z" fill="#f6e27c" stroke="#9c8a3c" />
    <path d="M2 6 H14" stroke="#fff6c0" />
    <path d="M1 14 H15 V6" fill="none" stroke="#7d6c28" />
    {children}
  </g>
);

const MARKS = {
  dot: <rect x="7" y="8" width="2.4" height="2.4" fill="#d81818" />,
  line: <path d="M4 12 L12 6" stroke="#b03020" strokeWidth="1.2" />,
  mat: <g><rect x="5" y="7" width="3" height="5" fill="#2a55b0" /><rect x="8" y="9" width="3" height="3" fill="#30a040" /><rect x="8" y="6" width="3" height="3" fill="#c03020" /></g>,
  surf: <path d="M4 10 L8 7 L12 9 L8 12 Z" fill="#4a78c0" />,
  solid: <rect x="5" y="7" width="6" height="5.5" fill="#6a90c8" stroke="#2d4f90" strokeWidth="0.6" />,
  hole: <g><rect x="4" y="6.5" width="8" height="6" fill="#7a90b0" /><rect x="6.5" y="8" width="3" height="3" fill="#f2d775" /></g>,
  sup: <path d="M8 6 L11 12 H5 Z" fill="#20a040" />,
  lsup: <g fill="#20803a"><path d="M5 7 L7 12 H3 Z" /><path d="M11 7 L13 12 H9 Z" /></g>,
  ssup: <path d="M4 10 L8 7 L12 9 L9 12 Z" fill="#3a7ac0" stroke="#224" strokeWidth="0.4" />,
  hinge: <circle cx="8" cy="9.5" r="2" fill="#fff" stroke="#804020" />,
  thick: <path d="M4 12 L12 7 V10 L4 12 Z" fill="#7a6030" />,
  ortho: <g><rect x="4" y="7" width="8" height="5" fill="#6a90c8" /><path d="M4 9.5 H12 M8 7 V12" stroke="#fff" strokeWidth="0.6" /></g>,
  sec: <path d="M5 7 H11 M5 12 H11 M8 7 V12" stroke="#1e3a90" strokeWidth="1.3" />,
  div: <path d="M4 12 L12 6 M6 8 L9 12 M9 6 L11 10" stroke="#805020" strokeWidth="0.9" />,
  bar: <path d="M4 12 L12 7" stroke="#305090" strokeWidth="2" />,
  set: <path d="M4 7 L12 12 M12 7 L4 12" stroke="#c03020" strokeWidth="1.3" />,
  plain: null,
};

const TreeIcon = ({ m }) => {
  if (m === 'root') {
    return (
      <svg width="16" height="16" viewBox="0 0 16 16" className="shrink-0">
        <path d="M7 1 H15 V15 H7 Z" fill="#fff" stroke="#666" />
        <path d="M9 4 H14 M9 7 H14 M9 10 H14" stroke="#888" />
        <path d="M1 6 L7 3 L10 6 L8 12 Z" fill="#6f8fc0" stroke="#344" strokeWidth="0.6" />
      </svg>
    );
  }
  if (m === 'openF') {
    return (
      <svg width="17" height="16" viewBox="0 0 17 16" className="shrink-0">
        <path d="M1 3 H6 L7.5 5 H14 V14 H1 Z" fill="#a88a30" stroke="#6b5a18" />
        <path d="M1 14 L3.5 7 H16.5 L14 14 Z" fill="#f6de7a" stroke="#7d6c28" />
      </svg>
    );
  }
  if (m === 'closedF') {
    return <svg width="16" height="16" viewBox="0 0 16 16" className="shrink-0"><FolderBase /></svg>;
  }
  if (m === 'case') {
    return (
      <svg width="16" height="16" viewBox="0 0 16 16" className="shrink-0">
        <path d="M9 2 V11" stroke="#2d5da8" strokeWidth="1.3" />
        <path d="M7 9 H11 L9 13 Z" fill="#2d5da8" />
        <path d="M2 14 H15" stroke="#333" />
      </svg>
    );
  }
  if (m === 'combo') {
    return (
      <svg width="16" height="16" viewBox="0 0 16 16" className="shrink-0">
        <path d="M2 3 H8 V13 H2 M8 8 H12" fill="none" stroke="#333" strokeDasharray="2 1" />
        <rect x="11" y="6" width="4" height="4" fill="#18a040" />
        <rect x="6" y="1" width="3" height="3" fill="#fff" stroke="#333" strokeWidth="0.6" />
      </svg>
    );
  }
  if (m.startsWith('mod')) {
    return (
      <svg width="16" height="16" viewBox="0 0 16 16" className="shrink-0">
        <rect x="1" y="1" width="14" height="14" fill="#dfe2e6" stroke="#8a86f2" strokeWidth="2" />
        {m === 'modS' && <path d="M3 11 L8 5 L13 7 L11 12 Z" fill="#28a060" stroke="#204" strokeWidth="0.5" />}
        {m === 'modM' && <path d="M5 4 H11 M5 12 H11 M8 4 V12" stroke="#667" strokeWidth="2" />}
        {m === 'modE' && <text x="3" y="13" fontSize="8" fontWeight="700" fontFamily="Liberation Sans, sans-serif" fill="#444">EC</text>}
      </svg>
    );
  }
  return (
    <svg width="16" height="16" viewBox="0 0 16 16" className="shrink-0">
      <FolderBase>{MARKS[m]}</FolderBase>
    </svg>
  );
};

const Expander = ({ kind }) => (
  <span className="flex h-[9px] w-[9px] items-center justify-center border border-[#8e98a8] bg-linear-to-b from-white to-[#dfe3ea]">
    <span className="relative block h-px w-[5px] bg-[#1f3f7a]">
      {kind === '+' && <span className="absolute left-[2px] top-[-2px] block h-[5px] w-px bg-[#1f3f7a]" />}
    </span>
  </span>
);

const Spine = ({ half }) => (
  <span className={`absolute left-[9px] top-0 block w-0 border-l border-dotted border-[#7c7c7c] ${half ? 'h-[9px]' : 'h-[18px]'}`} />
);

const TreeLabel = ({ bold, children }) => (
  <span className={`ml-[3px] text-[11.5px] leading-[18px] tracking-[-0.2px] text-[#10102a] ${bold ? 'font-bold' : ''}`}>{children}</span>
);

const TreeRow = ({ level, label, exp, mark, end }) => (
  <div className="flex h-[18px] items-center whitespace-nowrap">
    <span className="h-[18px] w-[19px] shrink-0" />
    {level === 2 && (
      <span className="relative h-[18px] w-[19px] shrink-0"><Spine /></span>
    )}
    <span className="relative flex h-[18px] w-[19px] shrink-0 items-center">
      <Spine half={level === 2 && end} />
      <span className="absolute left-[10px] top-[9px] block w-[9px] border-t border-dotted border-[#7c7c7c]" />
      {exp && <span className="absolute left-[5px] top-[5px]"><Expander kind={exp} /></span>}
    </span>
    <span className="ml-[3px] flex w-[16px] shrink-0 items-center"><TreeIcon m={mark} /></span>
    <TreeLabel>{label}</TreeLabel>
  </div>
);

// the root row sits one column further left than its children
const RootRow = () => (
  <div className="flex h-[18px] items-center whitespace-nowrap">
    <span className="relative flex h-[18px] w-[19px] shrink-0 items-center">
      <span className="absolute left-[9px] top-[9px] block w-[10px] border-t border-dotted border-[#7c7c7c]" />
      <span className="absolute left-[5px] top-[5px]"><Expander kind="-" /></span>
    </span>
    <span className="ml-[3px] flex w-[16px] shrink-0 items-center"><TreeIcon m="root" /></span>
    <TreeLabel bold>4659_friction* [teste]</TreeLabel>
  </div>
);

const Chevron = ({ d }) => (
  <svg width="9" height="9" viewBox="0 0 9 9" className="shrink-0">
    <path d={d} fill="none" stroke="#5d5d5d" strokeWidth="1.6" />
  </svg>
);

const NAVY = '#00007a';

const Arrow = ({ x1, y1, x2, y2, w = 1.8, head = 10, wing = 5, color = NAVY }) => {
  const a = Math.atan2(y2 - y1, x2 - x1);
  const bx = x2 - head * Math.cos(a);
  const by = y2 - head * Math.sin(a);
  const nx = -Math.sin(a) * wing;
  const ny = Math.cos(a) * wing;
  return (
    <g>
      <line x1={x1} y1={y1} x2={bx} y2={by} stroke={color} strokeWidth={w} />
      <polygon points={`${x2},${y2} ${bx + nx},${by + ny} ${bx - nx},${by - ny}`} fill={color} />
    </g>
  );
};

const LoadText = ({ x, y, children, len }) => (
  <text x={x} y={y} fontSize="10.5" fontWeight="700" fill={NAVY} textLength={len} lengthAdjust="spacingAndGlyphs" style={ARIAL}>
    {children}
  </text>
);

const Formula = ({ x, y, len, children }) => (
  <text x={x} y={y} fontSize="15.5" fontWeight="700" fill={NAVY} textLength={len} lengthAdjust="spacing" style={ARIAL}>
    {children}
  </text>
);

const AxisLabel = ({ x, y, c, children }) => (
  <text x={x} y={y} fontSize="10" fill={c} textAnchor="middle" style={ARIAL}>{children}</text>
);

const Triad = ({ x, y }) => (
  <g>
    <Arrow x1={x} y1={y} x2={x + 34} y2={y + 10} w={1.6} head={9} wing={3.5} color="#e01010" />
    <Arrow x1={x} y1={y} x2={x - 24} y2={y + 14} w={1.6} head={9} wing={3.5} color="#10c010" />
    <Arrow x1={x} y1={y} x2={x} y2={y + 39} w={1.6} head={10} wing={3.5} color="#1010e0" />
    <AxisLabel x={x + 41} y={y + 16} c="#e01010">X</AxisLabel>
    <AxisLabel x={x - 29} y={y + 20} c="#10c010">Y</AxisLabel>
    <AxisLabel x={x} y={y + 51} c="#1010e0">Z</AxisLabel>
  </g>
);

const Column = ({ dy, bottomDy }) => (
  <g>
    <g transform={`translate(0 ${bottomDy})`}>
      <polygon points="988,470 994,463 1030,470 1027,484 993,480" fill="#6ff2f6" />
    </g>
    <polygon
      points={`996,${293.5 + dy} 1026,${301 + dy} 1026,${473 + bottomDy} 996,${465 + bottomDy}`}
      fill="#ef9419"
    />
    <polygon
      points={`1026,${301 + dy} 1041,${293 + dy} 1041,${464 + bottomDy} 1026,${473 + bottomDy}`}
      fill="#e08c1c"
    />
    <polygon
      points={`980,${289 + dy} 996,${294 + dy} 996,${465 + bottomDy} 980,${463 + bottomDy}`}
      fill="#fdb04a"
    />
    <polygon
      points={`980,${463 + bottomDy} 996,${456 + bottomDy} 1041,${464 + bottomDy} 1026,${473 + bottomDy}`}
      fill="#d9821c"
      fillOpacity="0.85"
    />
    <polygon points={`980,${289 + dy} 996,${281 + dy} 1041,${293 + dy} 1026,${301 + dy}`} fill="#b8291a" />
    <circle cx="1011" cy={291 + dy} r="3" fill="#8b0a0a" />
    <g transform={`translate(0 ${bottomDy})`}>
      <path d="M1016 464 q9 -10 15 -4 q2 6 -9 8" fill="none" stroke="#c9b450" strokeWidth="2" strokeOpacity="0.75" />
      <path d="M994 462 L1006 458 L1022 466 L1008 472 Z" fill="#b8a040" fillOpacity="0.45" />
      <circle cx="1011" cy="465" r="2.4" fill="#d8501a" />
    </g>
  </g>
);

const Drawing = () => (
  <svg
    className="absolute inset-0"
    width="1138"
    height="905"
    viewBox="360 100 1138 905"
  >
    <Column dy={0} bottomDy={0} />
    <Formula x={536} y={200} len={310}>Px,max = 0,1 x sqrt( 5² + 10² ) = 1,118 kN</Formula>
    <path d="M848 195 H862" stroke={NAVY} strokeWidth="1" fill="none" />
    <Arrow x1={862} y1={195} x2={969} y2={269} w={1} head={12} wing={4} />
    <Arrow x1={1011} y1={170} x2={1011} y2={257} />
    <LoadText x={1017} y={175} len={31}>10.000</LoadText>
    <Arrow x1={1061} y1={265} x2={1033} y2={281} w={2} />
    <LoadText x={1066} y={279} len={28}>5.000</LoadText>
    <LoadText x={972} y={273} len={22}>1.118</LoadText>
    <Arrow x1={967} y1={279} x2={980} y2={285} w={2} head={8} wing={5} />
    <Triad x={1011} y={466} />

    <Column dy={394} bottomDy={397} />
    <Formula x={541} y={592} len={291}>Px,max = 0,1 x 5 + 0,1 x 10 = 1,500 kN</Formula>
    <path d="M834 587 H848" stroke={NAVY} strokeWidth="1" fill="none" />
    <Arrow x1={848} y1={587} x2={955} y2={661} w={1} head={12} wing={4} />
    <Arrow x1={1011} y1={564} x2={1011} y2={651} />
    <LoadText x={1017} y={569} len={31}>10.000</LoadText>
    <Arrow x1={1061} y1={659} x2={1033} y2={675} w={2} />
    <LoadText x={1066} y={673} len={28}>5.000</LoadText>
    <LoadText x={970} y={666} len={26}>1.500</LoadText>
    <Arrow x1={965} y1={673} x2={979} y2={679} w={2} head={8} wing={5} />

    <Triad x={415} y={872} />
  </svg>
);

const STATUS = [
  ['AJUSTAR', 'w-[52px]'],
  ['GRELHA', 'w-[49px]', true],
  ['CARTES', 'w-[50px]'],
  ['AJUST. OBJ.', 'w-[68px]'],
  ['LINHAS AUX.', 'w-[72px]'],
  ['DXF', 'w-[28px]'],
];

export default function App() {
  return (
    <div className="flex h-[1039px] w-[1498px] flex-col overflow-hidden bg-[#cfd3db]" style={UI}>
      {/* Title bar */}
      <div className="flex h-[22px] shrink-0 items-center bg-white pl-[2px]">
        <svg width="17" height="17" viewBox="0 0 17 17">
          <path d="M4 6 L10 1 L16 4 V10 L10 14 L4 11 Z" fill="#7a8ea8" stroke="#3a4a5a" strokeWidth="0.7" />
          <path d="M7 5 L12 8 V13" stroke="#d8e0ea" fill="none" />
          <rect x="1" y="8" width="8" height="8" fill="#c8a020" stroke="#5a4a10" strokeWidth="0.5" />
          <path d="M3 10 H7 M3 10 V12 H7 V14 H3" stroke="#fff" fill="none" />
        </svg>
        <span className="ml-[4px] whitespace-pre text-[11.5px] tracking-[-0.15px] text-black">RFEM 5.23.01 x64  - [4659_friction, CC1*]</span>
      </div>

      {/* Menu */}
      <div className="flex h-[24px] shrink-0 items-center">
        <Grip cls="ml-[4px] w-[3px]" />
        <svg width="17" height="14" viewBox="0 0 17 14" className="ml-[3px]">
          <rect width="17" height="14" fill="#1a2f6c" />
          <path d="M0 8 H17 M8 1 L2 8 M8 1 L15 8 M8 1 V14" stroke="#fff" strokeWidth="1.2" fill="none" />
        </svg>
        <div className="ml-[9px] flex text-[11.5px] tracking-[-0.1px] text-[#4e535c]">
          {MENU.map(([a, u, b, w]) => (
            <span key={a + u + b} className={`shrink-0 whitespace-nowrap ${w}`}>
              {a}<span className="underline">{u}</span>{b}
            </span>
          ))}
        </div>
      </div>

      {/* Toolbars */}
      <div className="flex h-[26px] shrink-0 items-center gap-[2px] pl-[2px]">
        <Toolbar tokens={ROW1A} cls="w-[863px]" grip="w-[8px]" />
        <Toolbar tokens={ROW1C} cls="w-[326px]" grip="w-[9px]" />
        <Toolbar tokens={ROW1D} cls="w-[99px]" grip="w-[10px]" />
      </div>
      <div className="flex h-[26px] shrink-0 items-center pl-[2px]">
        <Toolbar tokens={ROW2A} cls="w-[634px]" grip="w-[7px]" />
        <Toolbar tokens={ROW2B} cls="ml-[5px] w-[303px]" grip="w-[5px]" />
        <Toolbar tokens={ROW2C} cls="ml-[2px] w-[351px]" grip="w-[8px]" />
      </div>

      {/* Body */}
      <div className="flex min-h-0 flex-1">
        <aside className="flex w-[354px] shrink-0 flex-col border-r border-[#b4b8c0]">
          <div className="flex h-[23px] shrink-0 items-center justify-between pb-[3px] pl-[4px] pr-[5px] text-[11.5px] tracking-[-0.2px] text-[#5c6068]">
            <span>Navegador de projetos - Dados</span>
            <span className="flex items-center gap-[7px]">
              <svg width="10" height="11" viewBox="0 0 10 11"><path d="M3 1 H7 V6 H3 Z M1 6 H9 M5 6 V10" fill="none" stroke="#7c8088" /></svg>
              <svg width="10" height="10" viewBox="0 0 10 10"><path d="M1 1 L9 9 M9 1 L1 9" stroke="#7c8088" strokeWidth="1.4" /></svg>
            </span>
          </div>
          <div className="ml-[2px] mr-[1px] flex h-[873px] shrink-0 flex-col border border-[#f4f5f7] bg-[#e9ebef] pb-[2px] pl-[2px]">
            <div className="flex min-h-0 flex-1">
              <div className="min-w-0 flex-1 overflow-hidden bg-[#fdfdf5] pl-[1px]">
                <RootRow />
                {TREE.map(([level, label, exp, mark, end]) => (
                  <TreeRow key={label} level={level} label={label} exp={exp} mark={mark} end={end} />
                ))}
              </div>
              <div className="flex w-[17px] shrink-0 flex-col bg-[#f0f0f0]">
                <span className="flex h-[24px] items-center justify-center"><Chevron d="M1 6 L4.5 2.5 L8 6" /></span>
                <span className="h-[344px] bg-[#cdcdcd]" />
                <span className="flex-1" />
                <span className="flex h-[20px] items-center justify-center"><Chevron d="M1 3 L4.5 6.5 L8 3" /></span>
              </div>
            </div>
            <div className="flex h-[15px] shrink-0 items-center">
              <span className="flex h-full w-[16px] items-center justify-center bg-[#f0f0f0]"><Chevron d="M6 1 L2.5 4.5 L6 8" /></span>
              <span className="h-full w-[169px] bg-[#cdcdcd]" />
              <span className="h-full flex-1 bg-[#f0f0f0]" />
              <span className="flex h-full w-[17px] items-center justify-center bg-[#f0f0f0]"><Chevron d="M3 1 L6.5 4.5 L3 8" /></span>
              <span className="h-full w-[16px]" />
            </div>
          </div>
          <div className="flex h-[24px] shrink-0 items-center pl-[3px] text-[11.5px] tracking-[-0.2px] text-[#5c6068]">
            <span className="flex h-[22px] w-[57px] items-center gap-[2px] rounded-b-[3px] border border-t-0 border-[#b9dfe6] bg-[#e6edf0] pl-[2px]">
              <svg width="16" height="16" viewBox="0 0 16 16">
                <rect x="1" y="1" width="12" height="10" fill="#f2d775" stroke="#3a5fa8" />
                <rect x="1" y="1" width="12" height="2.5" fill="#3a5fa8" />
                <circle cx="9" cy="10" r="3.4" fill="#e8eef6" stroke="#333" />
                <path d="M11.5 12.5 L15 15.5" stroke="#a02020" strokeWidth="1.6" />
              </svg>
              Dados
            </span>
            <span className="ml-[8px] flex items-center gap-[3px]">
              <svg width="15" height="15" viewBox="0 0 16 16">
                <rect x="2" y="4" width="11" height="11" fill="#fff" stroke="#445" />
                <path d="M4 8 H11 M4 10.5 H11 M4 13 H11" stroke="#2d5da8" />
                <path d="M3 4 Q7 0 14 2 V5 H3 Z" fill="#8b7567" />
              </svg>
              Mostrar
            </span>
            <span className="ml-[11px] flex items-center gap-[1px]">
              <svg width="15" height="15" viewBox="0 0 16 16">
                <path d="M2 14 L8 7 L14 14 Z" fill="#9db8e6" stroke="#3a5fa8" />
                <path d="M8 8 L14 1" stroke="#3a5fa8" strokeWidth="1.6" />
              </svg>
              Vistas
            </span>
          </div>
        </aside>

        <main className="ml-[4px] flex min-w-0 flex-1 flex-col">
          <div className="relative h-[907px] shrink-0 overflow-hidden border-l-2 border-t-2 border-[#8d9096] bg-white">
            <div className="relative z-10 pl-[5px] pt-[4px] text-[11px] leading-[14px] tracking-[-0.3px] text-[#111]">
              <div>CC1</div>
              <div>Cargas [kN]</div>
            </div>
            <Drawing />
          </div>
          <div className="h-[4px] shrink-0 border-t border-white bg-[#e6e8ec]" />
          <div className="h-[10px] shrink-0 overflow-hidden bg-[#c9ccd3] pl-[3px] text-[11px] leading-[14px] text-[#6a6e76]">
            4.0 Resultados - sumário
          </div>
        </main>
      </div>

      {/* Status bar */}
      <div className="flex h-[20px] shrink-0 items-center justify-between bg-linear-to-b from-[#9da0a6] via-[#b6b9bf] to-[#c1c3c9] pl-[4px]">
        <span className="pt-[2px] text-[10.5px] tracking-[-0.2px] text-[#222]">Ponto da malha</span>
        <div className="mr-[77px] flex h-[18px] items-stretch gap-[2px] text-[11.5px] text-[#333]" style={ARIAL}>
          {STATUS.map(([label, w, up]) => (
            <span
              key={label}
              className={`flex shrink-0 items-center justify-center whitespace-nowrap ${w} ${
                up
                  ? 'border border-b-[#8e9096] border-r-[#8e9096] border-l-white border-t-white bg-[#c9ccd2]'
                  : 'border-l border-t border-black bg-linear-to-b from-[#c6c8ce] to-[#d3d5da]'
              }`}
            >
              {label}
            </span>
          ))}
        </div>
      </div>
    </div>
  );
}
